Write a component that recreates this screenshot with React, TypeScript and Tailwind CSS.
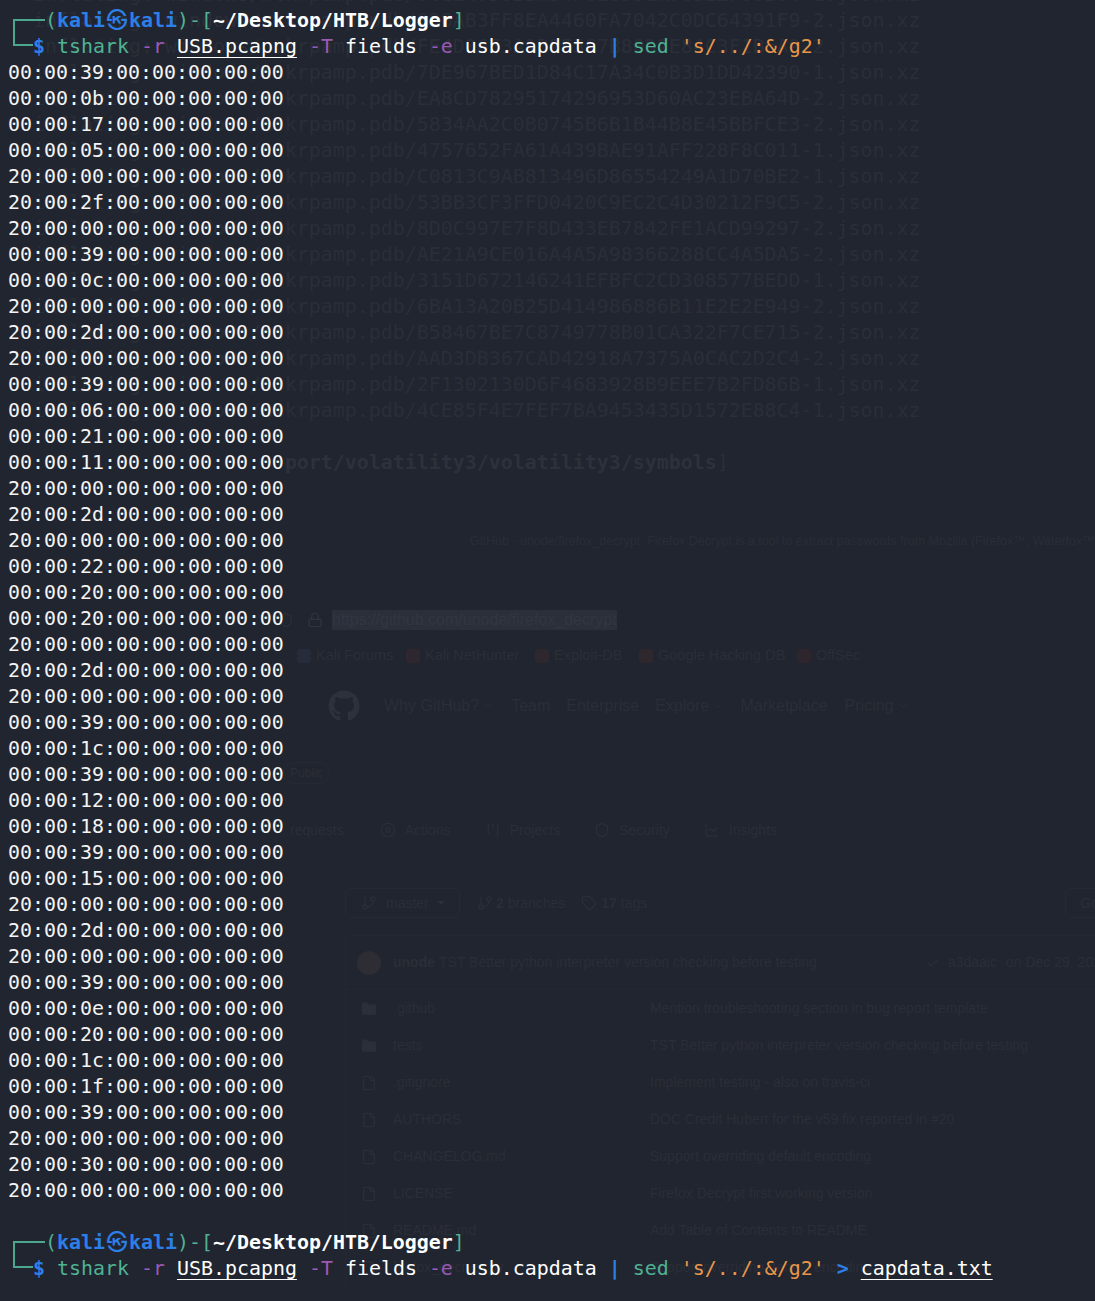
import { Check, ChevronDown, CirclePlay, File, Folder, GitBranch, Kanban, LineChart, Lock, Shield, Tag } from 'lucide-react';
import { FaGithub } from 'react-icons/fa';

const output = [
  '00:00:39', '00:00:0b', '00:00:17', '00:00:05', '20:00:00', '20:00:2f', '20:00:00', '00:00:39', '00:00:0c',
  '20:00:00', '20:00:2d', '20:00:00', '00:00:39', '00:00:06', '00:00:21', '00:00:11', '20:00:00', '20:00:2d',
  '20:00:00', '00:00:22', '00:00:20', '00:00:20', '20:00:00', '20:00:2d', '20:00:00', '00:00:39', '00:00:1c',
  '00:00:39', '00:00:12', '00:00:18', '00:00:39', '00:00:15', '20:00:00', '20:00:2d', '20:00:00', '00:00:39',
  '00:00:0e', '00:00:20', '00:00:1c', '00:00:1f', '00:00:39', '20:00:00', '20:00:30', '20:00:00',
];

const hashes = [
  '9C1E47D02BA34F6E8D51A7C3E2F09B64-1',
  '0D8AB3FF8EA4460FA7042C0DC64391F9-2',
  'FE4D06F3A1B9E5C7B80D2E84C3F1B6A9-2',
  '7DE967BED1D84C17A34C0B3D1DD42390-1',
  'EA8CD78295174296953D60AC23EBA64D-2',
  '5834AA2C0B0745B6B1B44B8E45BBFCE3-2',
  '4757652FA61A439BAE91AFF228F8C011-1',
  'C0813C9AB813496D86554249A1D70BE2-1',
  '53BB3CF3FFD0420C9EC2C4D30212F9C5-2',
  '8D0C997E7F8D433EB7842FE1ACD99297-2',
  'AE21A9CE016A4A5A98366288CC4A5DA5-2',
  '3151D672146241EFBFC2CD308577BEDD-1',
  '6BA13A20B25D414986886B11E2E2E949-2',
  'B58467BE7C8749778B01CA322F7CE715-2',
  'AAD3DB367CAD42918A7375A0CAC2D2C4-2',
  '2F1302130D6F4683928B9EEE7B2FD86B-1',
  '4CE85F4E7FEF7BA9453435D1572E88C4-1',
];

const files = [
  { name: '.github', message: 'Mention troubleshooting section in bug report template', dir: true },
  { name: 'tests', message: 'TST Better python interpreter version checking before testing', dir: true },
  { name: '.gitignore', message: 'Implement testing - also on travis-ci', dir: false },
  { name: 'AUTHORS', message: 'DOC Credit Hubert for the v59 fix reported in #20', dir: false },
  { name: 'CHANGELOG.md', message: 'Support overriding default encoding', dir: false },
  { name: 'LICENSE', message: 'Firefox Decrypt first working version', dir: false },
  { name: 'README.md', message: 'Add Table of Contents to README', dir: false },
  { name: 'firefox_decrypt.py', message: 'Support overriding default encoding', dir: false },
];

const bookmarks = [
  { name: 'Kali Forums', dot: 'bg-[#262c3c]', width: 'w-[109px]' },
  { name: 'Kali NetHunter', dot: 'bg-[#2e272f]', width: 'w-[129px]' },
  { name: 'Exploit-DB', dot: 'bg-[#2e272d]', width: 'w-[104px]' },
  { name: 'Google Hacking DB', dot: 'bg-[#2e272d]', width: 'w-[158px]' },
  { name: 'OffSec', dot: 'bg-[#2e252d]', width: 'w-[70px]' },
];

function Prompt({ redirect }: { redirect?: boolean }) {
  return (
    <div className="relative">
      {/* corner of the two line kali prompt */}
      <span className="absolute left-[5px] top-[11px] h-[13px] w-[32px] border-l-2 border-t-2 border-[#4ba88c]" />
      <span className="absolute left-[5px] top-[24px] h-[14px] w-[20px] border-b-2 border-l-2 border-[#4ba88c]" />

      <div className="h-[26px] pl-[37px] text-[#4fb294]">
        (<span className="font-bold text-[#2d7fe8]">kali</span>
        <span className="inline-block h-[26px] w-[24px] align-top text-center font-['Noto_Sans_CJK_KR',sans-serif] text-[21px] font-bold leading-[20px] text-[#2d7fe8]">㉿</span>
        <span className="font-bold text-[#2d7fe8]">kali</span>)-[
        <span className="font-bold text-white">~/Desktop/HTB/Logger</span>]
      </div>
      <div className="h-[26px] pl-[25px] text-white">
        <span className="font-bold text-[#2d7fe8]">$</span> <span className="text-[#4fb294]">tshark</span>{' '}
        <span className="text-[#9b59b6]">-r</span> <span className="underline underline-offset-[4px]">USB.pcapng</span>{' '}
        <span className="text-[#9b59b6]">-T</span> fields <span className="text-[#9b59b6]">-e</span> usb.capdata{' '}
        <span className="font-bold text-[#2d7fe8]">|</span> <span className="text-[#4fb294]">sed</span>{' '}
        <span className="text-[#e8974a]">'s/../:&amp;/g2'</span>
        {redirect && (
          <>
            {' '}
            <span className="font-bold text-[#2d7fe8]">&gt;</span>{' '}
            <span className="underline underline-offset-[4px]">capdata.txt</span>
          </>
        )}
      </div>
    </div>
  );
}

// what shows faintly through the transparent terminal window
function Backdrop() {
  return (
    <div className="absolute inset-0 overflow-hidden text-[#2a2e38]">
      <div className="-mt-[18px] whitespace-pre pl-[9px] font-['DejaVu_Sans_Mono',monospace] text-[19.93px] leading-[26px]">
        {hashes.map((hash) => (
          <div key={hash}>{`  inflating: windows/ntkrpamp.pdb/${hash}.json.xz`}</div>
        ))}
        <div className="h-[26px]" />
        <div>
          <span className="text-transparent">{'                       '}</span>
          <span className="font-bold text-[#2d313b]">port/volatility3/volatility3/symbols</span>]
        </div>
      </div>

      <div className="whitespace-nowrap font-['Liberation_Sans',sans-serif] text-[14px]">
        <div className="mt-[53px] flex h-[24px] items-center pl-[470px] text-[12.5px] text-[#292d37]">
          GitHub - unode/firefox_decrypt: Firefox Decrypt is a tool to extract passwords from Mozilla (Firefox™, Waterfox™
        </div>
        <div className="mt-[32px] border-t border-[#23272f]" />

        <div className="mt-[24px] flex h-[20px] items-center pl-[278px]">
          <Shield size={16} className="shrink-0" />
          <Lock size={16} className="ml-[13px] shrink-0 text-[#2f333d]" />
          <span className="ml-[9px] flex h-[20px] w-[285px] items-center bg-[#2b2f3a] text-[16px] text-[#323640]">
            https://github.com/unode/firefox_decrypt
          </span>
        </div>

        <div className="mt-[14px] flex h-[24px] items-center pl-[297px] text-[14.5px]">
          {bookmarks.map((b) => (
            <div key={b.name} className={`flex items-center gap-[5px] ${b.width}`}>
              <span className={`h-[14px] w-[14px] rounded-sm ${b.dot}`} />
              <span>{b.name}</span>
            </div>
          ))}
        </div>

        <div className="mt-[18px] flex h-[40px] items-center pl-[328px] text-[16px]">
          <FaGithub size={32} className="text-[#2d313b]" />
          <span className="ml-[24px]">Why GitHub?</span>
          <ChevronDown size={12} className="ml-[3px]" />
          <span className="ml-[17px]">Team</span>
          <span className="ml-[16px]">Enterprise</span>
          <span className="ml-[16px]">Explore</span>
          <ChevronDown size={12} className="ml-[3px]" />
          <span className="ml-[16px]">Marketplace</span>
          <span className="ml-[17px]">Pricing</span>
          <ChevronDown size={12} className="ml-[3px]" />
        </div>

        <div className="mt-[36px] pl-[283px]">
          <span className="flex h-[22px] w-[47px] items-center justify-center rounded-full border border-[#262a33] text-[12px]">Public</span>
        </div>

        <div className="mt-[34px] flex h-[24px] items-center pl-[290px]">
          <span>requests</span>
          <CirclePlay size={16} className="ml-[36px]" />
          <span className="ml-[9px]">Actions</span>
          <Kanban size={16} className="ml-[34px]" />
          <span className="ml-[9px]">Projects</span>
          <Shield size={16} className="ml-[34px]" />
          <span className="ml-[9px]">Security</span>
          <LineChart size={16} className="ml-[34px]" />
          <span className="ml-[9px]">Insights</span>
        </div>

        <div className="mt-[46px] flex h-[30px] w-max items-center pl-[345px]">
          <div className="flex h-[30px] w-[115px] items-center rounded-md border border-[#262a33] pl-[15px]">
            <GitBranch size={16} />
            <span className="ml-[9px]">master</span>
            <span className="ml-[8px] border-x-[4px] border-t-[4px] border-x-transparent border-t-[#2b2f39]" />
          </div>
          <GitBranch size={16} className="ml-[17px]" />
          <span className="ml-[3px]"><b>2</b> branches</span>
          <Tag size={16} className="ml-[16px]" />
          <span className="ml-[4px]"><b>17</b> tags</span>
          <div className="ml-[418px] flex h-[30px] w-[60px] items-center rounded-md border border-[#262a33] pl-[14px]">Go</div>
        </div>

        <div className="ml-[345px] mt-[17px] flex h-[55px] w-max items-center rounded-t-md border border-[#242831] pl-[11px]">
          <span className="h-[24px] w-[24px] rounded-full bg-[#2d2d33]" />
          <b className="ml-[12px]">unode</b>
          <span className="ml-[4px] w-[487px]">TST Better python interpreter version checking before testing</span>
          <Check size={14} className="mr-[8px]" />
          <span className="w-[58px]">a3daaic</span>
          <span>on Dec 29, 2021</span>
        </div>

        <div className="ml-[345px]">
          {files.map((f) => (
            <div key={f.name} className="flex h-[37px] items-center border-l border-[#242831] pl-[15px]">
              {f.dir ? <Folder size={16} className="fill-[#2b2f39]" /> : <File size={16} />}
              <span className="ml-[16px] w-[257px]">{f.name}</span>
              <span>{f.message}</span>
            </div>
          ))}
        </div>
      </div>
    </div>
  );
}

export default function App() {
  return (
    <div className="relative h-[1301px] w-[1095px] overflow-hidden bg-[#21252f]">
      <Backdrop />
      <div className="relative whitespace-pre pl-[8px] pt-[8px] font-['DejaVu_Sans_Mono',monospace] text-[19.93px] leading-[26px] text-[#f4f4f4]">
        <Prompt />
        {output.map((line, index) => (
          <div key={index} className="h-[26px]">{line}:00:00:00:00:00</div>
        ))}
        <div className="h-[26px]" />
        <Prompt redirect />
      </div>
    </div>
  );
}
